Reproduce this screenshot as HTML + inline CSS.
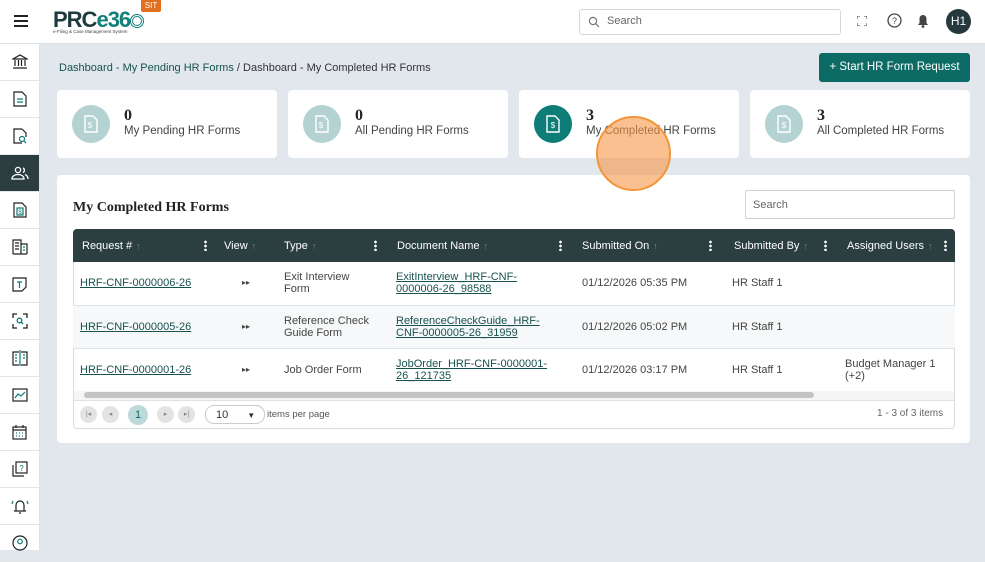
<!DOCTYPE html>
<html><head><meta charset="utf-8"><style>
*{box-sizing:border-box;margin:0;padding:0}
body{width:985px;height:550px;overflow:hidden;background:#e2e7ed;font-family:"Liberation Sans",sans-serif;color:#333;position:relative}
.hdr{position:absolute;left:0;top:0;width:985px;height:44px;background:#fff;border-bottom:1px solid #dde2e8}
.side{position:absolute;left:0;top:44px;width:40px;height:506px;background:#fff;border-right:1px solid #dde2e8}
.si{height:37px;border-bottom:1px solid #e3e6e9;display:flex;align-items:center;justify-content:center}
.si.act{background:#2b3d3f}
.abs{position:absolute}
.card{position:absolute;background:#fff;border-radius:4px}
.circ{position:absolute;left:15px;top:15px;width:38px;height:38px;border-radius:50%;background:#b5d2d2;display:flex;align-items:center;justify-content:center}
.num{position:absolute;left:67px;top:17px;font-family:"Liberation Serif",serif;font-weight:bold;font-size:16px;color:#222}
.lbl{position:absolute;left:67px;top:35px;font-size:11.5px;color:#444}
table{border-collapse:collapse;position:absolute;left:73px;top:229px;width:882px;font-size:11px}
th{background:#2b3e40;color:#fff;font-weight:normal;height:33px;text-align:left;padding-left:9px;font-size:11px;position:relative}
th .ar{color:#7d8c8d;font-size:9px;margin-left:4px}
th .dots{position:absolute;right:8px;top:11px;width:3px;height:11px;background:radial-gradient(circle,#fff 1.2px,transparent 1.5px) 0 0/3px 4px repeat-y}
td{height:43px;border-bottom:1px solid #dde2e6;padding-left:7px;color:#444;vertical-align:middle;line-height:12px}
td a{color:#17524f;text-decoration:underline}
tr.alt td{background:#f6f8f9}
.pg{width:17px;height:17px;border-radius:50%;background:#e3e3e3;display:inline-block;position:absolute;top:406px;font-size:7px;color:#888;text-align:center;line-height:17px}
</style></head><body>
<div class="hdr">
 <div class="abs" style="left:14px;top:15px;width:14px;height:2px;background:#222;box-shadow:0 5px 0 #222,0 10px 0 #222"></div>
 <div class="abs" style="left:53px;top:7px;font-size:22px;font-weight:bold;color:#1d3b3e;letter-spacing:-1px">PRC<span style="color:#11807b">e36</span><span style="display:inline-block;width:14px;height:14px;border:3px double #11807b;border-radius:50%;vertical-align:-1px"></span></div>
 <div class="abs" style="left:53px;top:29px;font-size:4.5px;color:#444">e-Filing &amp; Case Management System</div>
 <div class="abs" style="left:141px;top:0;width:20px;height:12px;background:#e07020;color:#fff;font-size:8px;text-align:center;line-height:12px;border-radius:0 0 2px 2px">SIT</div>
 <div class="abs" style="left:579px;top:9px;width:262px;height:26px;border:1px solid #d4d8dc;border-radius:3px;font-size:11px;color:#666;padding:5px 0 0 27px">Search
  <svg class="abs" style="left:8px;top:6px" width="12" height="12" viewBox="0 0 12 12"><circle cx="5" cy="5" r="3.6" fill="none" stroke="#777" stroke-width="1.2"/><path d="M7.6 7.6L11 11" stroke="#777" stroke-width="1.2"/></svg></div>
 <svg class="abs" style="left:857px;top:16px" width="10" height="10" viewBox="0 0 10 10" fill="none" stroke="#666" stroke-width="1.2"><path d="M0 3V0h3M7 0h3v3M10 7v3H7M3 10H0V7"/></svg>
 <svg class="abs" style="left:887px;top:13px" width="15" height="15" viewBox="0 0 15 15"><circle cx="7.5" cy="7.5" r="6.5" fill="none" stroke="#444" stroke-width="1.3"/><text x="7.5" y="11" font-size="9" text-anchor="middle" fill="#444" font-family="Liberation Sans">?</text></svg>
 <svg class="abs" style="left:917px;top:14px" width="12" height="14" viewBox="0 0 12 14"><path d="M6 1C3.5 1 2.5 3 2.5 5v4L1 11h10L9.5 9V5C9.5 3 8.5 1 6 1z" fill="#444"/><circle cx="6" cy="12.5" r="1.4" fill="#444"/></svg>
 <div class="abs" style="left:946px;top:9px;width:25px;height:25px;border-radius:50%;background:#243a3c;color:#fff;font-size:12px;text-align:center;line-height:25px">H1</div>
</div>
<div class="side">
 <div class="si"><svg width="16" height="16" viewBox="0 0 16 16" fill="none" stroke="#222" stroke-width="1.2"><path d="M1 5L8 1l7 4zM3 6v6M6.5 6v6M9.5 6v6M13 6v6M1 14h14"/></svg></div>
 <div class="si"><svg width="14" height="16" viewBox="0 0 14 16" fill="none" stroke="#222" stroke-width="1.2"><path d="M1 1h8l4 4v10H1z"/><path d="M4 8h6M4 11h6" stroke="#0e7b77"/></svg></div>
 <div class="si"><svg width="14" height="16" viewBox="0 0 14 16" fill="none" stroke="#222" stroke-width="1.2"><path d="M9 1H1v14h8M9 1l4 4v4"/><circle cx="9" cy="11" r="2.5" stroke="#0e7b77"/><path d="M11 13l2 2" stroke="#0e7b77"/></svg></div>
 <div class="si act"><svg width="18" height="14" viewBox="0 0 18 14" fill="none" stroke="#fff" stroke-width="1.3"><circle cx="7" cy="4" r="2.6"/><path d="M1 13c0-3 3-4.5 6-4.5s6 1.5 6 4.5zM12 2a2.5 2.5 0 010 4.5M14 8.5c2 .8 3 2 3 4.5"/></svg></div>
 <div class="si"><svg width="14" height="16" viewBox="0 0 14 16" fill="none" stroke="#222" stroke-width="1.2"><path d="M1 1h8l4 4v10H1z"/><rect x="4" y="6" width="6" height="7" stroke="#0e7b77"/><text x="7" y="12" font-size="6" text-anchor="middle" fill="#0e7b77" stroke="none">$</text></svg></div>
 <div class="si"><svg width="16" height="16" viewBox="0 0 16 16" fill="none" stroke="#222" stroke-width="1.2"><path d="M1 15V1h8v14M9 5h6v10M1 15h14M3 4h4M3 7h4M3 10h4" /><path d="M11 8h2M11 11h2" stroke="#0e7b77"/></svg></div>
 <div class="si"><svg width="15" height="15" viewBox="0 0 15 15" fill="none" stroke="#222" stroke-width="1.2"><path d="M1 1h13v9l-4 4H1z"/><path d="M5 5h5M7.5 5v6" stroke="#0e7b77"/></svg></div>
 <div class="si"><svg width="16" height="16" viewBox="0 0 16 16" fill="none" stroke="#222" stroke-width="1.3"><path d="M1 5V1h4M11 1h4v4M15 11v4h-4M5 15H1v-4"/><circle cx="7.5" cy="7.5" r="2.3" stroke="#0e7b77"/><path d="M9.3 9.3l1.7 1.7" stroke="#0e7b77"/></svg></div>
 <div class="si"><svg width="16" height="16" viewBox="0 0 16 16" fill="none" stroke="#222" stroke-width="1.2"><path d="M7 2H1v13h6M9 2h6v13H9" /><path d="M8 0v16" stroke="#0e7b77"/><path d="M3 5h2M3 8h2M3 11h2M11 5h2M11 8h2" stroke="#0e7b77"/></svg></div>
 <div class="si"><svg width="16" height="14" viewBox="0 0 16 14" fill="none" stroke="#222" stroke-width="1.2"><rect x="1" y="1" width="14" height="12"/><path d="M3 10l3-4 3 2 4-4" stroke="#0e7b77"/></svg></div>
 <div class="si"><svg width="15" height="16" viewBox="0 0 15 16" fill="none" stroke="#222" stroke-width="1.2"><rect x="1" y="3" width="13" height="12"/><path d="M1 6h13M4 1v3M11 1v3"/><path d="M4 9h1M7 9h1M10 9h1M4 12h1M7 12h1M10 12h1" stroke="#0e7b77"/></svg></div>
 <div class="si"><svg width="16" height="16" viewBox="0 0 16 16" fill="none" stroke="#222" stroke-width="1.2"><rect x="4" y="1" width="11" height="11"/><path d="M1 4v11h11"/><text x="9.5" y="10" font-size="8" text-anchor="middle" fill="#0e7b77" stroke="none">?</text></svg></div>
 <div class="si"><svg width="18" height="16" viewBox="0 0 18 16" fill="none" stroke="#222" stroke-width="1.2"><path d="M5 13V7a4 4 0 018 0v6zM3 13h12M8 15h2"/><path d="M2 3L1 6M16 3l1 3" stroke="#0e7b77"/></svg></div>
 <div class="si"><svg width="16" height="16" viewBox="0 0 16 16" fill="none" stroke="#222" stroke-width="1.2"><circle cx="8" cy="8" r="7"/><circle cx="8" cy="6.5" r="2.3" stroke="#0e7b77"/></svg></div>
</div>

<div class="abs" style="left:59px;top:62px;font-size:11px;color:#17524f">Dashboard - My Pending HR Forms <span style="color:#333">/ Dashboard - My Completed HR Forms</span></div>
<div class="abs" style="left:819px;top:53px;width:151px;height:29px;background:#0d6b66;border-radius:3px;color:#fff;font-size:11.5px;text-align:center;line-height:29px">+ Start HR Form Request</div>

<div class="card" style="left:57px;top:90px;width:220px;height:68px"><div class="circ"><svg width="16" height="18" viewBox="0 0 16 18" fill="none" stroke="#fff" stroke-width="1.4"><path d="M2 1h8l4 4v12H2z"/><text x="7" y="13" font-size="8" fill="#fff" stroke="none" text-anchor="middle">$</text></svg></div><div class="num">0</div><div class="lbl">My Pending HR Forms</div></div>
<div class="card" style="left:288px;top:90px;width:220px;height:68px"><div class="circ"><svg width="16" height="18" viewBox="0 0 16 18" fill="none" stroke="#fff" stroke-width="1.4"><path d="M2 1h8l4 4v12H2z"/><text x="7" y="13" font-size="8" fill="#fff" stroke="none" text-anchor="middle">$</text></svg></div><div class="num">0</div><div class="lbl">All Pending HR Forms</div></div>
<div class="card" style="left:519px;top:90px;width:220px;height:68px"><div class="circ" style="background:#0e7c77"><svg width="16" height="18" viewBox="0 0 16 18" fill="none" stroke="#fff" stroke-width="1.4"><path d="M2 1h8l4 4v12H2z"/><text x="8" y="13" font-size="8" fill="#fff" stroke="none" text-anchor="middle">$</text></svg></div><div class="num">3</div><div class="lbl">My Completed HR Forms</div></div>
<div class="card" style="left:750px;top:90px;width:220px;height:68px"><div class="circ"><svg width="16" height="18" viewBox="0 0 16 18" fill="none" stroke="#fff" stroke-width="1.4"><path d="M2 1h8l4 4v12H2z"/><text x="8" y="13" font-size="8" fill="#fff" stroke="none" text-anchor="middle">$</text></svg></div><div class="num">3</div><div class="lbl">All Completed HR Forms</div></div>

<div class="card" style="left:57px;top:175px;width:913px;height:268px"></div>
<div class="abs" style="left:73px;top:200px;font-family:'Liberation Serif',serif;font-weight:bold;font-size:14px;color:#222">My Completed HR Forms</div>
<div class="abs" style="left:745px;top:190px;width:210px;height:29px;border:1px solid #ccd1d5;border-radius:2px;font-size:11px;color:#666;padding:8px 0 0 7px">Search</div>
<div class="abs" style="left:73px;top:229px;width:882px;height:200px;border:1px solid #d8dde1;border-radius:4px"></div>
<table>
<tr><th style="width:142px;border-radius:4px 0 0 0">Request #<span class="ar">↑</span><span class="dots"></span></th><th style="width:60px">View<span class="ar">↑</span></th><th style="width:110px">Type<span class="ar">↑</span><span class="dots"></span></th><th style="width:185px;padding-left:12px">Document Name<span class="ar">↑</span><span class="dots"></span></th><th style="width:150px;padding-left:12px">Submitted On<span class="ar">↑</span><span class="dots"></span></th><th style="width:115px;padding-left:14px">Submitted By<span class="ar">↑</span><span class="dots"></span></th><th style="border-radius:0 4px 0 0;padding-left:12px">Assigned Users<span class="ar">↑</span><span class="dots"></span></th></tr>
<tr><td><a>HRF-CNF-0000006-26</a></td><td style="padding-left:27px;font-size:8px">▸▸</td><td style="padding-left:9px">Exit Interview<br>Form</td><td style="padding-left:11px"><a>ExitInterview_HRF-CNF-<br>0000006-26_98588</a></td><td style="padding-left:12px">01/12/2026 05:35 PM</td><td style="padding-left:12px">HR Staff 1</td><td></td></tr>
<tr class="alt"><td><a>HRF-CNF-0000005-26</a></td><td style="padding-left:27px;font-size:8px">▸▸</td><td style="padding-left:9px">Reference Check<br>Guide Form</td><td style="padding-left:11px"><a>ReferenceCheckGuide_HRF-<br>CNF-0000005-26_31959</a></td><td style="padding-left:12px">01/12/2026 05:02 PM</td><td style="padding-left:12px">HR Staff 1</td><td></td></tr>
<tr><td><a>HRF-CNF-0000001-26</a></td><td style="padding-left:27px;font-size:8px">▸▸</td><td style="padding-left:9px">Job Order Form</td><td style="padding-left:11px"><a>JobOrder_HRF-CNF-0000001-<br>26_121735</a></td><td style="padding-left:12px">01/12/2026 03:17 PM</td><td style="padding-left:12px">HR Staff 1</td><td style="padding-left:10px">Budget Manager 1<br>(+2)</td></tr>
</table>
<div class="abs" style="left:74px;top:391px;width:880px;height:9px;background:#f5f5f5"></div>
<div class="abs" style="left:84px;top:392px;width:730px;height:6px;background:#c4c4c4;border-radius:3px"></div>
<div class="abs" style="left:74px;top:400px;width:880px;height:1px;background:#dde2e6"></div>
<div class="pg" style="left:80px">|◂</div><div class="pg" style="left:102px">◂</div>
<div class="pg" style="left:128px;width:20px;height:20px;top:405px;line-height:20px;background:#bcd8d8;color:#0e6b66;font-size:11px">1</div>
<div class="pg" style="left:157px">▸</div><div class="pg" style="left:178px">▸|</div>
<div class="abs" style="left:205px;top:405px;width:60px;height:19px;border:1px solid #ccc;border-radius:9px;font-size:11px;padding:3px 0 0 10px">10 <span style="font-size:8px;margin-left:16px">▼</span></div>
<div class="abs" style="left:267px;top:409px;font-size:9.5px;color:#555">items per page</div>
<div class="abs" style="left:877px;top:408px;font-size:10px;color:#666">1 - 3 of 3 items</div>

<div class="abs" style="left:596px;top:116px;width:75px;height:75px;border-radius:50%;background:rgba(247,150,70,0.6);border:2px solid #f3963a"></div>
</body></html>
